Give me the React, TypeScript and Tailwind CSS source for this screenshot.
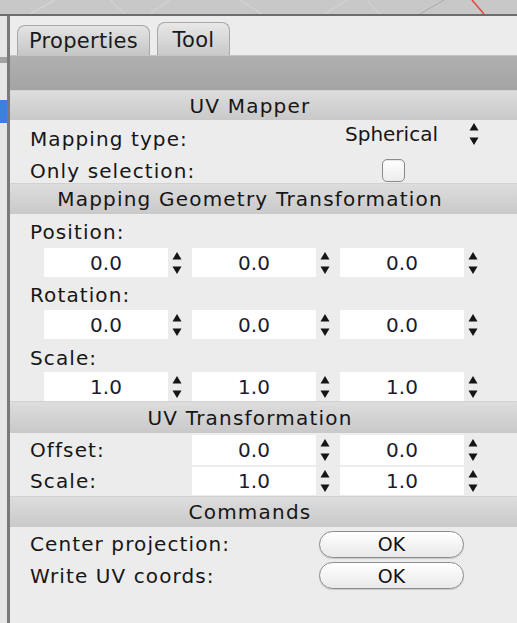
import React from "react";

const FONT = "font-['DejaVu_Sans','Verdana',sans-serif]";

const Spin = ({ className = "" }: { className?: string }) => (
  <svg width="10" height="24" viewBox="0 0 10 24" className={className}>
    <path d="M5 1 L9.5 8.5 L0.5 8.5 Z" fill="#151515" />
    <path d="M0.5 15.5 L9.5 15.5 L5 23 Z" fill="#151515" />
  </svg>
);

const Num = ({ v, h = "h-[29px]" }: { v: string; h?: string }) => (
  <div className="flex items-center">
    <div
      className={`w-[124px] ${h} bg-white flex items-center justify-center text-[20px] leading-[24px] text-[#1b1b30]`}
    >
      {v}
    </div>
    <Spin className="ml-[4px]" />
  </div>
);

const Header = ({ children, h }: { children: React.ReactNode; h: string }) => (
  <div
    className={`${h} flex items-center justify-center pr-[27px] bg-gradient-to-b from-[#dddddd] to-[#c9c9c9] border-t border-[#d2d2d2] text-[20px] leading-[24px] tracking-[1.2px] text-[#161616]`}
  >
    {children}
  </div>
);

const Label = ({ children, className = "" }: { children: React.ReactNode; className?: string }) => (
  <div className={`text-[20px] leading-[24px] tracking-[1.1px] text-[#161616] ${className}`}>{children}</div>
);

const TripleRow = ({ vals }: { vals: string[] }) => (
  <div className="h-[29px] flex gap-[10px] pl-[34px]">
    {vals.map((v, i) => (
      <Num key={i} v={v} />
    ))}
  </div>
);

const OkButton = () => (
  <div className="w-[145px] h-[27px] rounded-full border border-[#8c8c8c] bg-gradient-to-b from-[#ffffff] to-[#e9e9e9] shadow-[0_1px_1px_rgba(0,0,0,0.15)] flex items-center justify-center text-[19px] leading-[22px] text-[#111]">
    OK
  </div>
);

export default function App() {
  return (
    <div className={`w-[517px] h-[623px] overflow-hidden bg-[#ececec] flex flex-col ${FONT}`}>
      {/* viewport strip */}
      <div className="h-[14px] bg-[#c8c8c8] shrink-0">
        <svg width="517" height="14" viewBox="0 0 517 14">
          <line x1="30" y1="14" x2="55" y2="0" stroke="#d9d9d9" strokeWidth="1" />
          <line x1="110" y1="0" x2="125" y2="14" stroke="#d6d6d6" strokeWidth="1" />
          <line x1="150" y1="14" x2="170" y2="0" stroke="#d6d6d6" strokeWidth="1" />
          <line x1="240" y1="0" x2="262" y2="14" stroke="#d6d6d6" strokeWidth="1" />
          <line x1="325" y1="14" x2="347" y2="0" stroke="#d6d6d6" strokeWidth="1" />
          <line x1="367" y1="0" x2="380" y2="14" stroke="#d6d6d6" strokeWidth="1" />
          <line x1="420" y1="14" x2="444" y2="0" stroke="#a9a9a9" strokeWidth="1" />
          <line x1="472" y1="0" x2="484" y2="14" stroke="#e0453a" strokeWidth="1.5" />
        </svg>
      </div>
      <div className="h-[2px] bg-[#6d6d6d] shrink-0" />
      <div className="flex flex-1">
        {/* left strip */}
        <div className="w-[7px] flex flex-col bg-[#e6e6e6]">
          <div className="h-[41px]" />
          <div className="h-[6px] bg-[#a2a2a2]" />
          <div className="h-[37px]" />
          <div className="h-[23px] bg-[#3b7fe0]" />
          <div className="flex-1" />
        </div>
        <div className="w-[3px] bg-[#7a7a7a]" />
        {/* panel */}
        <div className="flex-1 flex flex-col bg-[#ececec]">
          {/* tabs */}
          <div className="h-[39px] flex items-end pl-[7px] gap-[7px]">
            <div className="h-[30px] w-[133px] rounded-t-[8px] border border-b-0 border-[#a8a8a8] bg-gradient-to-b from-[#e4e4e4] to-[#c6c6c6] flex items-center justify-center text-[21px] leading-[24px] tracking-[0.3px] text-[#1a1a1a]">
              Properties
            </div>
            <div className="h-[33px] w-[73px] rounded-t-[8px] border border-b-0 border-[#a8a8a8] bg-gradient-to-b from-[#e8e8e8] to-[#c9c9c9] flex items-center justify-center pt-[2px] text-[21px] leading-[24px] tracking-[0.3px] text-[#1a1a1a]">
              Tool
            </div>
          </div>
          <div className="h-[35px] bg-gradient-to-b from-[#b0b0b0] to-[#a4a4a4] border-t border-[#c4c4c4]" />

          <Header h="h-[30px]">UV Mapper</Header>
          {/* mapping type */}
          <div className="h-[38px] flex pl-[20px]">
            <Label className="w-[315px] pt-[7px]">Mapping type:</Label>
            <div className="w-[134px] flex items-center justify-between self-start pt-[2px]">
              <div className="text-[20px] leading-[24px] text-[#161616]">Spherical</div>
              <Spin />
            </div>
          </div>
          {/* only selection */}
          <div className="h-[25px] flex items-center pl-[20px]">
            <Label className="w-[352px]">Only selection:</Label>
            <div className="w-[23px] h-[23px] rounded-[5px] border border-[#8a8a8a] bg-gradient-to-b from-[#ffffff] to-[#ececec] shadow-[inset_0_1px_1px_rgba(0,0,0,0.1)]" />
          </div>

          <Header h="h-[31px]">Mapping Geometry Transformation</Header>
          <div className="h-[34px] pl-[20px] pt-[6px]">
            <Label>Position:</Label>
          </div>
          <TripleRow vals={["0.0", "0.0", "0.0"]} />
          <div className="h-[33px] pl-[20px] pt-[6px]">
            <Label>Rotation:</Label>
          </div>
          <TripleRow vals={["0.0", "0.0", "0.0"]} />
          <div className="h-[33px] pl-[20px] pt-[7px]">
            <Label>Scale:</Label>
          </div>
          <TripleRow vals={["1.0", "1.0", "1.0"]} />

          <Header h="h-[32px]">UV Transformation</Header>
          <div className="h-[32px] flex items-center pl-[20px] pt-[2px]">
            <Label className="w-[162px]">Offset:</Label>
            <div className="flex gap-[10px]">
              <Num v="0.0" h="h-[30px]" />
              <Num v="0.0" h="h-[30px]" />
            </div>
          </div>
          <div className="h-[31px] flex items-center pl-[20px]">
            <Label className="w-[162px]">Scale:</Label>
            <div className="flex gap-[10px]">
              <Num v="1.0" h="h-[28px]" />
              <Num v="1.0" h="h-[28px]" />
            </div>
          </div>

          <Header h="h-[31px]">Commands</Header>
          <div className="h-[32px] flex items-center pl-[20px] pt-[2px]">
            <Label className="w-[289px]">Center projection:</Label>
            <OkButton />
          </div>
          <div className="h-[31px] flex items-center pl-[20px] pt-[2px]">
            <Label className="w-[289px]">Write UV coords:</Label>
            <OkButton />
          </div>
          <div className="flex-1" />
        </div>
      </div>
    </div>
  );
}
